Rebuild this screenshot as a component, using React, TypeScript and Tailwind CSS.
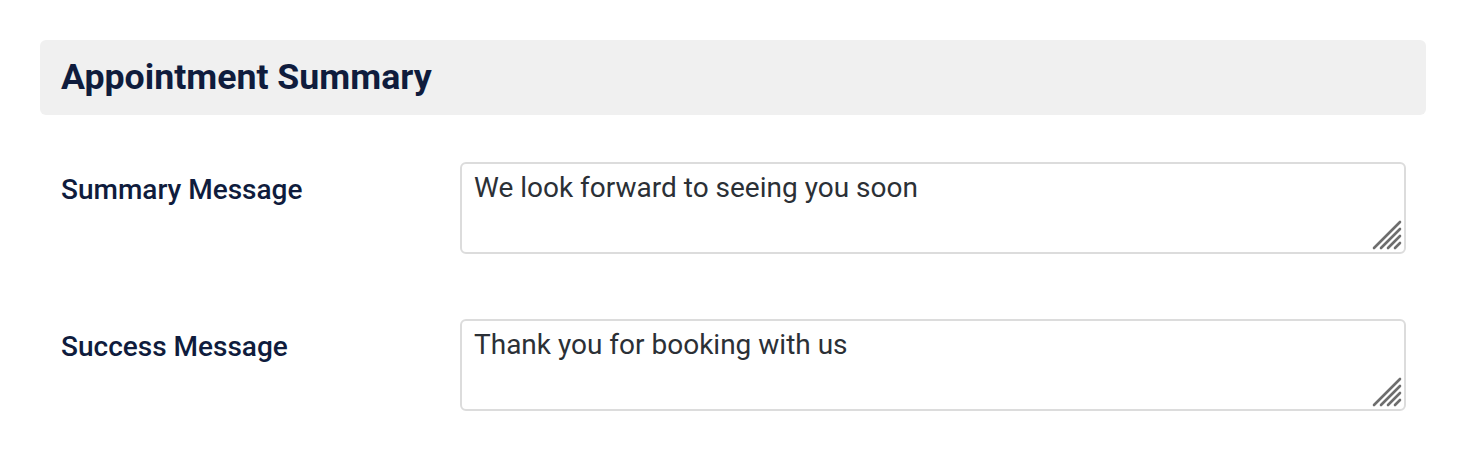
import React from "react";

function Grip() {
  return (
    <svg
      className="pointer-events-none absolute bottom-[4px] right-[4px]"
      width="30"
      height="30"
      viewBox="0 0 30 30"
      fill="none"
      stroke="#6e6e6e"
      strokeWidth="2.6"
      strokeLinecap="round"
    >
      <line x1="2" y1="28" x2="28" y2="2" />
      <line x1="9" y1="28" x2="28" y2="9" />
      <line x1="16" y1="28" x2="28" y2="16" />
      <line x1="23" y1="28" x2="28" y2="23" />
    </svg>
  );
}

function Row({ label, value, className }: { label: string; value: string; className?: string }) {
  return (
    <div className={"flex items-start " + (className ?? "")}>
      <div className="w-[420px] shrink-0 pl-[21px] pt-[11px] text-[28px] font-medium leading-[34px] text-[#0f1c3d]">
        {label}
      </div>
      <div className="relative flex-1">
        <textarea
          defaultValue={value}
          className="block h-[92px] w-full resize-none rounded-[6px] border-2 border-[#dcdcdc] bg-white px-[12px] pt-[7px] text-[28px] leading-[34px] text-[#2b3036] outline-none"
        />
        <Grip />
      </div>
    </div>
  );
}

export default function App() {
  return (
    <div className="bg-white px-[40px] pt-[40px] pb-[40px]" style={{ fontFamily: "Roboto, 'Noto Sans', sans-serif" }}>
      <div className="flex h-[75px] items-center rounded-[6px] bg-[#f0f0f0] pl-[21px]">
        <h2 className="text-[35.7px] font-bold leading-none text-[#0f1c3d]">Appointment Summary</h2>
      </div>
      <div className="pr-[20px]">
        <Row className="mt-[47px]" label="Summary Message" value="We look forward to seeing you soon" />
        <Row className="mt-[65px]" label="Success Message" value="Thank you for booking with us" />
      </div>
    </div>
  );
}
